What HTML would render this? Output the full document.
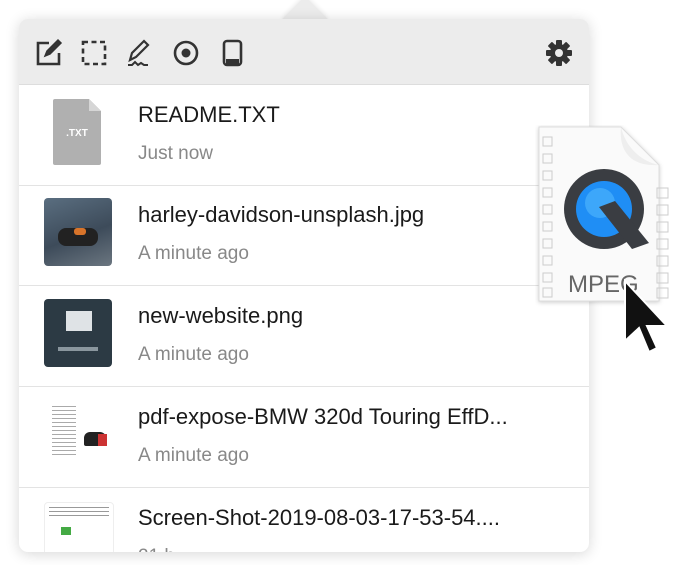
<!DOCTYPE html>
<html><head><meta charset="utf-8"><style>
body{margin:0;width:700px;height:565px;background:#fff;position:relative;overflow:hidden;font-family:"Liberation Sans",sans-serif}
.panel{position:absolute;left:19px;top:19px;width:570px;height:533px;border-radius:9px;background:#fff;box-shadow:0 2px 14px rgba(0,0,0,.16);overflow:hidden}
.arrow{position:absolute;left:289px;top:3px;width:32px;height:32px;background:#ececec;transform:rotate(45deg);box-shadow:0 0 6px rgba(0,0,0,.12)}
.tb{position:absolute;left:0;top:0;width:570px;height:65px;background:#ececec;border-bottom:1px solid #ddd}
.row{position:absolute;left:0;width:570px;height:100px;border-bottom:1px solid #e3e3e3}
.t{position:absolute;left:119px;top:17px;font-size:22px;color:#1a1a1a;white-space:nowrap}
.s{position:absolute;left:119px;top:58px;font-size:19px;color:#888}
.th{position:absolute;left:25px;top:13px;width:68px;height:68px;border-radius:4px}
</style></head><body>
<div class="arrow"></div>
<div class="panel">
<div class="tb">
<svg width="570" height="65" style="position:absolute;left:0;top:0" fill="none" stroke="#333" stroke-width="2.6">
<path d="M30 24h-11v21h21v-11"/><path d="M26 37l2-5 11-11 3 3-11 11z" fill="#333" stroke-width="1.5"/>
<rect x="64" y="23" width="22" height="22" stroke-dasharray="5 3.5"/>
<path d="M111 41l2-7 12-12 4 4-12 12z" stroke-width="2.2"/><path d="M109 46h4l3-3 3 3 3-2 3 2h4" stroke-width="2"/>
<circle cx="167" cy="34" r="11"/><circle cx="167" cy="34" r="4.5" fill="#333" stroke="none"/>
<rect x="205" y="22" width="17" height="24" rx="3"/><rect x="207" y="40" width="13" height="5" fill="#333" stroke="none"/>
<g fill="#333" stroke="none" transform="translate(540 34)">
<circle r="9"/>
<rect x="-3" y="-13" width="6" height="26" rx="1"/>
<rect x="-3" y="-13" width="6" height="26" rx="1" transform="rotate(45)"/>
<rect x="-3" y="-13" width="6" height="26" rx="1" transform="rotate(90)"/>
<rect x="-3" y="-13" width="6" height="26" rx="1" transform="rotate(135)"/>
<circle r="4" fill="#ececec"/>
</g>
</svg>
</div>
<div class="row" style="top:66px">
<svg class="th" viewBox="0 0 68 68" style="border-radius:0"><path d="M11 1h34l12 12v52a2 2 0 0 1-2 2H11a2 2 0 0 1-2-2V3a2 2 0 0 1 2-2z" fill="#b0b0b0"/><path d="M45 1v12h12z" fill="#d6d6d6"/><text x="33" y="38" font-size="10" font-weight="bold" fill="#fff" text-anchor="middle" font-family="Liberation Sans">.TXT</text></svg>
<div class="t">README.TXT</div><div class="s">Just now</div></div>
<div class="row" style="top:166px">
<div class="th" style="background:linear-gradient(160deg,#5a6e80,#3d4b5a 55%,#6b7680)"><div style="position:absolute;left:14px;top:30px;width:40px;height:18px;background:#222;border-radius:8px"></div><div style="position:absolute;left:30px;top:30px;width:12px;height:7px;background:#d8742a;border-radius:3px"></div></div>
<div class="t">harley-davidson-unsplash.jpg</div><div class="s">A minute ago</div></div>
<div class="row" style="top:267px">
<div class="th" style="background:#2c3a44"><div style="position:absolute;left:22px;top:12px;width:26px;height:20px;background:#dfe3e6"></div><div style="position:absolute;left:14px;top:48px;width:40px;height:4px;background:#8a969e"></div></div>
<div class="t">new-website.png</div><div class="s">A minute ago</div></div>
<div class="row" style="top:368px">
<div class="th" style="background:#fff"><div style="position:absolute;left:8px;top:6px;width:24px;height:50px;background:repeating-linear-gradient(#aaa 0 1px,#fff 1px 4px)"></div><div style="position:absolute;left:40px;top:32px;width:22px;height:14px;background:#222;border-radius:6px 6px 2px 2px"></div><div style="position:absolute;left:54px;top:34px;width:9px;height:12px;background:#c33"></div></div>
<div class="t">pdf-expose-BMW 320d Touring EffD...</div><div class="s">A minute ago</div></div>
<div class="row" style="top:469px;border:0">
<div class="th" style="background:#fff;top:14px;border:1px solid #eee"><div style="position:absolute;left:4px;top:4px;width:60px;height:10px;background:repeating-linear-gradient(#999 0 1px,#fff 1px 4px)"></div><div style="position:absolute;left:16px;top:24px;width:10px;height:8px;background:#4a4"></div></div>
<div class="t">Screen-Shot-2019-08-03-17-53-54....</div><div class="s">21 h</div></div>
</div>
<svg width="140" height="230" style="position:absolute;left:535px;top:125px">
<path d="M4 2h82l38 38v136H4z" fill="#fafafa" stroke="#ddd" filter="drop-shadow(0 1px 2px rgba(0,0,0,.2))"/>
<path d="M86 2c-2 20 6 40 38 38c-20-4-34-20-38-38z" fill="#eee"/>
<g fill="none" stroke="#ccc"><rect x="8" y="12" width="9" height="9"/><rect x="8" y="29" width="9" height="9"/><rect x="8" y="46" width="9" height="9"/><rect x="8" y="63" width="9" height="9"/><rect x="8" y="80" width="9" height="9"/><rect x="8" y="97" width="9" height="9"/><rect x="8" y="114" width="9" height="9"/><rect x="8" y="131" width="9" height="9"/><rect x="8" y="148" width="9" height="9"/><rect x="8" y="163" width="9" height="9"/>
<rect x="122" y="63" width="11" height="10"/><rect x="122" y="80" width="11" height="10"/><rect x="122" y="97" width="11" height="10"/><rect x="122" y="114" width="11" height="10"/><rect x="122" y="131" width="11" height="10"/><rect x="122" y="148" width="11" height="10"/><rect x="122" y="163" width="11" height="10"/></g>
<circle cx="69" cy="84" r="40" fill="#3a3d42"/><circle cx="69" cy="84" r="28" fill="#1f8ef5"/><circle cx="65" cy="78" r="15" fill="#5cc0ff" opacity=".5"/>
<path d="M64 82l16-6 34 42-17 6z" fill="#3a3d42"/>
<text x="33" y="167" font-size="24" fill="#666" font-family="Liberation Sans">MPEG</text>
<path d="M90 156v60l14-13 10 24 8-4-10-22h20z" fill="#111" stroke="#fff" stroke-width="2"/>
</svg>
</body></html>
